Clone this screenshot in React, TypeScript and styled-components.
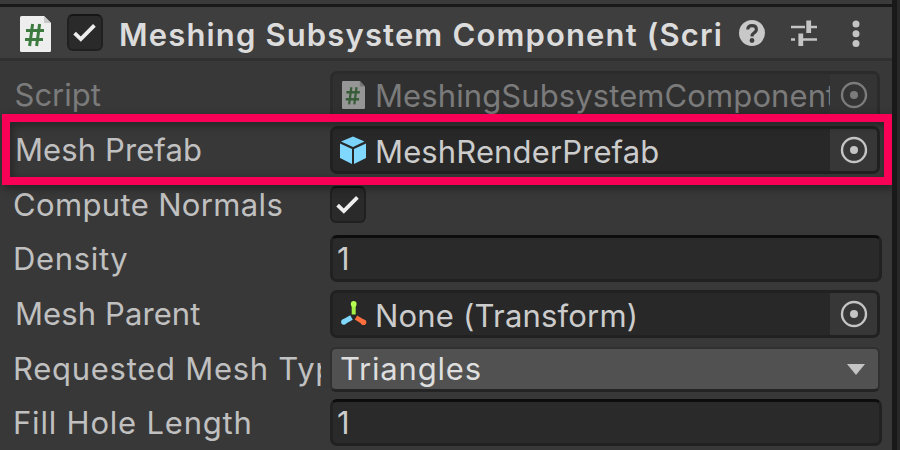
import React from "react";
import styled, { createGlobalStyle } from "styled-components";

const Global = createGlobalStyle`
  * { box-sizing: border-box; }
  body { margin: 0; background: #383838; font-family: "Inter", "Liberation Sans", sans-serif; overflow: hidden; }
`;

const Screen = styled.div`
  display: grid;
  grid-template-columns: 892px 5px 3px;
  width: 900px;
  height: 450px;
  overflow: hidden;
`;

const Panel = styled.main`
  position: relative;
  display: flex;
  flex-direction: column;
  height: 450px;
  overflow: hidden;
  background: #383838;
`;

const Divider = styled.div`
  background: #191919;
`;

const Gutter = styled.div`
  background: #282828;
`;

const TopEdge = styled.div`
  height: 7px;
  flex: none;
  background: #3a3a3a;
  border-bottom: 3px solid #191919;
`;

const Header = styled.header`
  display: flex;
  flex: none;
  height: 54px;
  padding-left: 20px;
  background: #3e3e3e;
  border-bottom: 3px solid #303030;

  svg { flex: none; }
`;

const Title = styled.h1`
  width: 604px;
  margin: 8px 0 0 16px;
  overflow: hidden;
  white-space: nowrap;
  font-size: 31px;
  line-height: 40px;
  font-weight: 600;
  letter-spacing: 1.15px;
  color: #dcdcdc;
`;

const HeaderIcons = styled.div`
  display: flex;
  align-items: flex-start;
  padding: 12px 0 0 15px;
`;

const Rows = styled.div`
  display: flex;
  flex-direction: column;
  padding-top: 7px;
`;

const Row = styled.div<{ $height: number; $dim?: boolean }>`
  display: grid;
  grid-template-columns: 330px 1fr;
  align-items: start;
  flex: none;
  height: ${(p) => p.$height}px;
  color: ${(p) => (p.$dim ? "#7b7b7b" : "#c0c0c0")};
`;

const Label = styled.span<{ $indent: number; $spacing: number; $top?: number }>`
  width: 321px;
  padding: ${(p) => p.$top ?? 7}px 0 0 ${(p) => p.$indent}px;
  overflow: hidden;
  white-space: nowrap;
  font-size: 31px;
  line-height: 40px;
  letter-spacing: ${(p) => p.$spacing}px;
`;

const ObjectField = styled.div<{ $dim?: boolean }>`
  display: grid;
  grid-template-columns: 42px 1fr 47px;
  width: 550px;
  height: 48px;
  margin-top: 3px;
  border: 3px solid ${(p) => (p.$dim ? "#2b2b2b" : "#212121")};
  border-radius: 7px;
  overflow: hidden;
  background: ${(p) => (p.$dim ? "#303030" : "#282828")};
  color: ${(p) => (p.$dim ? "#7b7b7b" : "#cccccc")};
`;

const ObjectIcon = styled.span<{ $left?: number }>`
  display: flex;
  padding: 7px 0 0 ${(p) => p.$left ?? 6}px;
`;

const ObjectName = styled.span<{ $spacing: number; $top?: number }>`
  overflow: hidden;
  white-space: nowrap;
  padding-top: ${(p) => p.$top ?? 4}px;
  font-size: 31px;
  line-height: 38px;
  letter-spacing: ${(p) => p.$spacing}px;
`;

const Picker = styled.button<{ $dim?: boolean }>`
  display: flex;
  justify-content: center;
  padding: 7px 0 0;
  border: 0;
  background: ${(p) => (p.$dim ? "#343434" : "#373737")};
  color: ${(p) => (p.$dim ? "#7b7b7b" : "#c4c4c4")};
`;

const NumberField = styled.div`
  width: 552px;
  height: 47px;
  margin-top: 3px;
  padding: 1px 0 0 4px;
  border: 3px solid #212121;
  border-top-color: #0d0d0d;
  border-radius: 7px;
  background: #2a2a2a;
  color: #cccccc;
  font-size: 31px;
  line-height: 40px;
`;

const CheckBox = styled.span<{ $top: number; $left: number }>`
  display: flex;
  flex: none;
  width: 36px;
  height: 37px;
  margin: ${(p) => p.$top}px 0 0 ${(p) => p.$left}px;
  border: 2px solid #202020;
  border-top-color: #151515;
  border-radius: 6px;
  background: #2a2a2a;
`;

const Dropdown = styled.div`
  display: flex;
  justify-content: space-between;
  width: 550px;
  height: 45px;
  margin-top: 6px;
  padding: 0 12px 0 8px;
  border: 2px solid #303030;
  border-bottom: 3px solid #242424;
  border-radius: 6px;
  background: #515151;
  color: #dedede;
  font-size: 31px;
  line-height: 40px;
  letter-spacing: 0.8px;

  svg { margin-top: 14px; }
`;

const Highlight = styled.div`
  position: absolute;
  left: 2px;
  top: 114px;
  width: 890px;
  height: 71px;
  border: 8px solid #f70055;
  filter: drop-shadow(2px 3px 4px rgba(0, 0, 0, 0.4));
`;

function ScriptIcon({ dim = false, width, height }: { dim?: boolean; width: number; height: number }) {
  return (
    <svg width={width} height={height} viewBox="0 0 31 36" preserveAspectRatio="none">
      <path d="M1.5 0H24L31 7V34.5Q31 36 29.5 36H1.5Q0 36 0 34.5V1.5Q0 0 1.5 0Z" fill={dim ? "#969696" : "#eeeeee"} />
      <path d="M24 0V7H31Z" fill={dim ? "#777" : "#c8c8c8"} />
      <path
        d="M12.6 8L9.6 30M19.6 8L16.6 30M6 14.5H24M5 23.5H23"
        stroke={dim ? "#365c38" : "#3c7a3f"}
        strokeWidth="3"
        fill="none"
      />
    </svg>
  );
}

function Check() {
  return (
    <svg width="32" height="32" viewBox="0 0 32 32">
      <path d="M5.6 17.2L11.8 23.2L25.4 9.4" stroke="#eeeeee" strokeWidth="3.8" fill="none" />
    </svg>
  );
}

function TargetIcon() {
  return (
    <svg width="28" height="28" viewBox="0 0 28 28">
      <circle cx="14" cy="14" r="12" fill="none" stroke="currentColor" strokeWidth="2.4" />
      <circle cx="14" cy="14" r="4" fill="currentColor" />
    </svg>
  );
}

function CubeIcon() {
  return (
    <svg width="28" height="30" viewBox="0 0 28 30">
      <path d="M14 0.5L25.5 5.5L14 11L2 5.5Z" fill="#7bd3fa" />
      <path d="M1 7.5L13 13V28L1 22Z" fill="#80d8ff" />
      <path d="M27 7.5L15 13V28L27 22Z" fill="#80d8ff" />
    </svg>
  );
}

function TransformIcon() {
  return (
    <svg width="28" height="28" viewBox="0 0 28 28">
      <g strokeWidth="4" strokeLinecap="butt">
        <path d="M14.7 4V14.5" stroke="#a5f045" />
        <path d="M12.5 17.5L4.5 22" stroke="#80d8ff" strokeWidth="5" />
        <path d="M17 17.5L25 22.5" stroke="#ff6f3d" strokeWidth="4.6" />
      </g>
      <circle cx="14.7" cy="4" r="2.9" fill="#b4ff50" />
      <circle cx="4.8" cy="22" r="2.7" fill="#80d8ff" />
      <circle cx="24.5" cy="22.2" r="2.8" fill="#ff6f3d" />
    </svg>
  );
}

function HelpIcon() {
  return (
    <svg width="28" height="28" viewBox="0 0 28 28">
      <circle cx="14" cy="14" r="13" fill="#c8c8c8" />
      <path d="M9.8 10.6Q9.8 6.6 14 6.6Q18.4 6.6 18.4 10.2Q18.4 12.4 16 13.8Q14 15 14 17.6" stroke="#3e3e3e" strokeWidth="3.1" fill="none" />
      <circle cx="14" cy="21.5" r="2.4" fill="#3e3e3e" />
    </svg>
  );
}

function PresetIcon() {
  return (
    <svg width="26" height="28" viewBox="0 0 26 28">
      <path d="M0 8H14M18 8H26M0 20.5H4M12 20.5H26" stroke="#c4c4c4" strokeWidth="2.6" />
      <path d="M17.7 1.5V14M9.8 14.5V27" stroke="#c4c4c4" strokeWidth="4.8" />
    </svg>
  );
}

function MenuIcon() {
  return (
    <svg width="10" height="28" viewBox="0 0 10 28">
      <g fill="#c4c4c4">
        <circle cx="5" cy="5" r="3.5" />
        <circle cx="5" cy="14.7" r="3.5" />
        <circle cx="5" cy="24.4" r="3.5" />
      </g>
    </svg>
  );
}

const PresetSlot = styled.span`
  display: flex;
  margin-left: 25px;
`;

const MenuSlot = styled.span`
  display: flex;
  margin-left: 34px;
`;

const HeaderScript = styled.span`
  display: flex;
  padding-top: 9px;
`;

export default function App() {
  return (
    <>
      <Global />
      <Screen>
        <Panel>
          <TopEdge />
          <Header>
            <HeaderScript>
              <ScriptIcon width={31} height={36} />
            </HeaderScript>
            <CheckBox $top={7} $left={16}>
              <Check />
            </CheckBox>
            <Title>Meshing Subsystem Component (Scri</Title>
            <HeaderIcons>
              <HelpIcon />
              <PresetSlot>
                <PresetIcon />
              </PresetSlot>
              <MenuSlot>
                <MenuIcon />
              </MenuSlot>
            </HeaderIcons>
          </Header>
          <Rows>
            <Row $height={55} $dim>
              <Label $indent={14.5} $spacing={0}>Script</Label>
              <ObjectField $dim>
                <ObjectIcon $left={9}>
                  <ScriptIcon dim width={23} height={28} />
                </ObjectIcon>
                <ObjectName $spacing={0.1} $top={3}>MeshingSubsystemComponent</ObjectName>
                <Picker $dim>
                  <TargetIcon />
                </Picker>
              </ObjectField>
            </Row>
            <Row $height={55}>
              <Label $indent={15} $spacing={0.1}>Mesh Prefab</Label>
              <ObjectField>
                <ObjectIcon>
                  <CubeIcon />
                </ObjectIcon>
                <ObjectName $spacing={0.13}>MeshRenderPrefab</ObjectName>
                <Picker>
                  <TargetIcon />
                </Picker>
              </ObjectField>
            </Row>
            <Row $height={54}>
              <Label $indent={13} $spacing={0.35}>Compute Normals</Label>
              <CheckBox $top={8} $left={0}>
                <Check />
              </CheckBox>
            </Row>
            <Row $height={55}>
              <Label $indent={13} $spacing={0.65}>Density</Label>
              <NumberField>1</NumberField>
            </Row>
            <Row $height={54}>
              <Label $indent={15} $spacing={0.1}>Mesh Parent</Label>
              <ObjectField>
                <ObjectIcon>
                  <TransformIcon />
                </ObjectIcon>
                <ObjectName $spacing={0.2}>None (Transform)</ObjectName>
                <Picker>
                  <TargetIcon />
                </Picker>
              </ObjectField>
            </Row>
            <Row $height={55}>
              <Label $indent={13} $spacing={0.73} $top={8}>Requested Mesh Type</Label>
              <Dropdown>
                <span>Triangles</span>
                <svg width="20" height="14" viewBox="0 0 20 14">
                  <path d="M1 1H19L10 12Z" fill="#c4c4c4" />
                </svg>
              </Dropdown>
            </Row>
            <Row $height={54}>
              <Label $indent={13} $spacing={0.8}>Fill Hole Length</Label>
              <NumberField>1</NumberField>
            </Row>
          </Rows>
          <Highlight />
        </Panel>
        <Divider />
        <Gutter />
      </Screen>
    </>
  );
}
